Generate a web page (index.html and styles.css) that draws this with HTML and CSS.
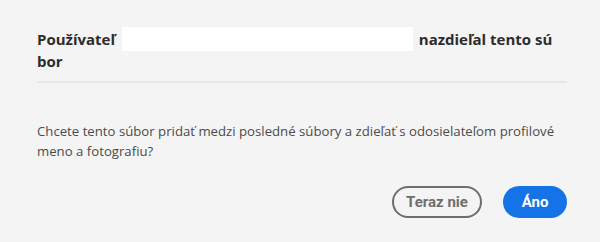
FILE: index.html
```html
<!DOCTYPE html>
<html lang="sk">
<head>
<meta charset="utf-8">
<link rel="stylesheet" href="styles.css">
</head>
<body>
<div class="dialog">
  <h1 class="title">Používateľ <span class="name"></span> nazdieľal tento sú<br>bor</h1>
  <div class="divider"></div>
  <p class="body">Chcete tento súbor pridať medzi posledné súbory a zdieľať s odosielateľom profilové meno a fotografiu?</p>
  <div class="actions">
    <button class="btn btn-secondary">Teraz nie</button>
    <button class="btn btn-primary">Áno</button>
  </div>
</div>
</body>
</html>
```
FILE: styles.css
```css
html, body {
  margin: 0;
  padding: 0;
  background: #f4f4f4;
}
.dialog {
  width: 600px;
  height: 242px;
  box-sizing: border-box;
  padding: 27px 33px 0 37px;
  background: #f4f4f4;
  font-family: "Open Sans", "Noto Sans", sans-serif;
  display: flex;
  flex-direction: column;
}
.title {
  margin: 0;
  font-size: 15px;
  font-weight: 700;
  line-height: 21px;
  color: #2c2c2c;
}
.name {
  display: inline-block;
  width: 291px;
  height: 24px;
  background: #ffffff;
  vertical-align: -6px;
  margin: 0 2px 0 3px;
}
.divider {
  height: 2px;
  background: #e8e8e8;
  margin-top: 9px;
}
.body {
  margin: 38px 0 0 0;
  font-size: 13.2px;
  line-height: 20px;
  color: #4b4b4b;
}
.actions {
  display: flex;
  justify-content: flex-end;
  gap: 21px;
  margin-top: 25px;
}
.btn {
  height: 32px;
  border-radius: 16px;
  font-family: Roboto, "Open Sans", sans-serif;
  font-weight: 700;
  font-size: 15px;
  box-sizing: border-box;
  padding: 0;
  white-space: nowrap;
  cursor: pointer;
}
.btn-secondary {
  background: transparent;
  border: 2px solid #6e6e6e;
  color: #6e6e6e;
  width: 90px;
}
.btn-primary {
  background: #1473e6;
  border: 2px solid #1473e6;
  color: #ffffff;
  width: 64px;
}
```
